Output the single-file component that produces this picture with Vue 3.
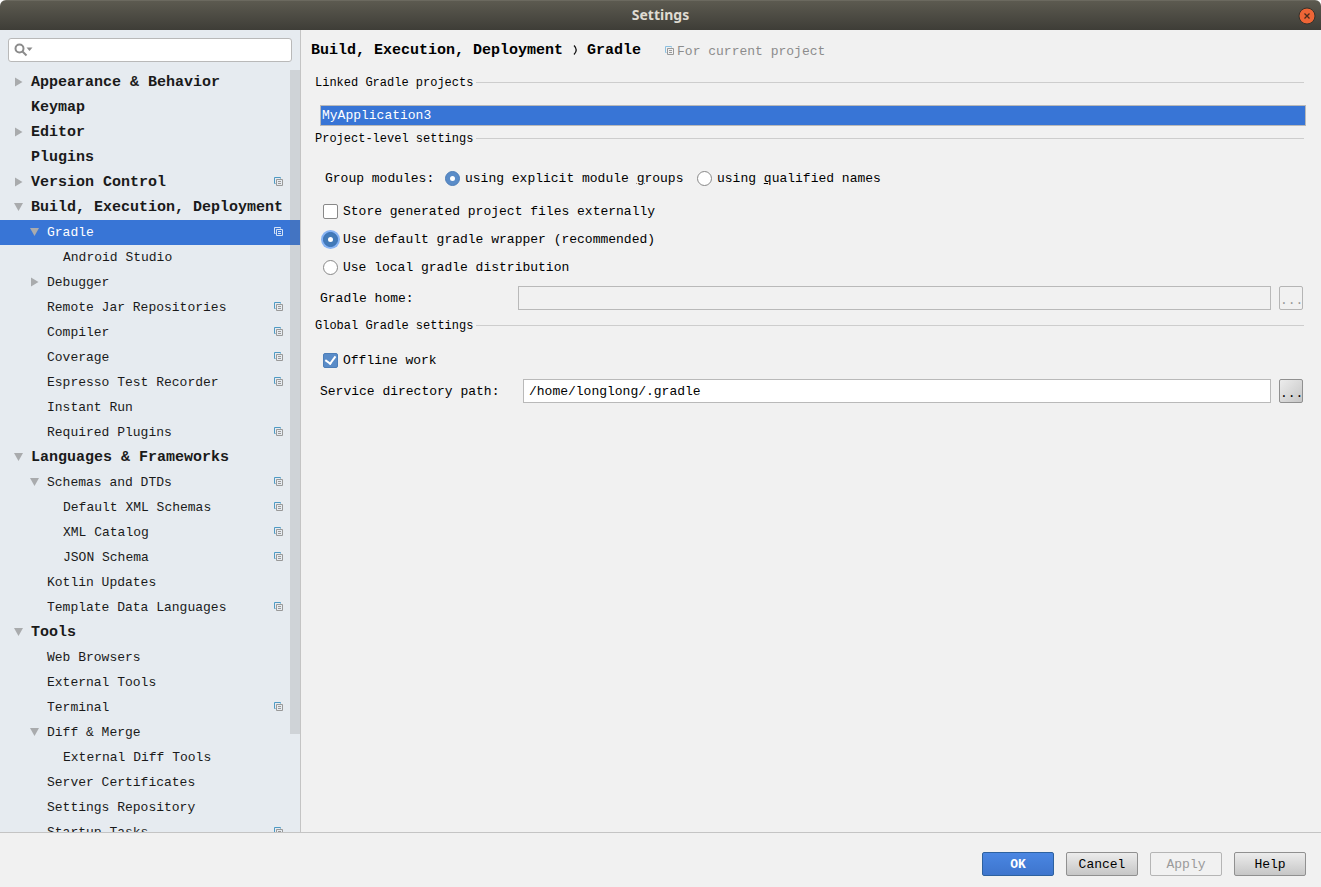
<script setup>
import { ref } from 'vue'

const rows = [
  { label: 'Appearance & Behavior', level: 0, state: 'closed' },
  { label: 'Keymap', level: 0 },
  { label: 'Editor', level: 0, state: 'closed' },
  { label: 'Plugins', level: 0 },
  { label: 'Version Control', level: 0, state: 'closed', project: true },
  { label: 'Build, Execution, Deployment', level: 0, state: 'open' },
  { label: 'Gradle', level: 1, state: 'open', project: true },
  { label: 'Android Studio', level: 2 },
  { label: 'Debugger', level: 1, state: 'closed' },
  { label: 'Remote Jar Repositories', level: 1, project: true },
  { label: 'Compiler', level: 1, project: true },
  { label: 'Coverage', level: 1, project: true },
  { label: 'Espresso Test Recorder', level: 1, project: true },
  { label: 'Instant Run', level: 1 },
  { label: 'Required Plugins', level: 1, project: true },
  { label: 'Languages & Frameworks', level: 0, state: 'open' },
  { label: 'Schemas and DTDs', level: 1, state: 'open', project: true },
  { label: 'Default XML Schemas', level: 2, project: true },
  { label: 'XML Catalog', level: 2, project: true },
  { label: 'JSON Schema', level: 2, project: true },
  { label: 'Kotlin Updates', level: 1 },
  { label: 'Template Data Languages', level: 1, project: true },
  { label: 'Tools', level: 0, state: 'open' },
  { label: 'Web Browsers', level: 1 },
  { label: 'External Tools', level: 1 },
  { label: 'Terminal', level: 1, project: true },
  { label: 'Diff & Merge', level: 1, state: 'open' },
  { label: 'External Diff Tools', level: 2 },
  { label: 'Server Certificates', level: 1 },
  { label: 'Settings Repository', level: 1 },
  { label: 'Startup Tasks', level: 1, project: true },
]

const selected = ref('Gradle')
const search = ref('')
const grouping = ref('explicit')
const storeExternally = ref(false)
const distribution = ref('wrapper')
const gradleHome = ref('')
const offline = ref(true)
const servicePath = ref('/home/longlong/.gradle')
</script>

<template>
  <div class="window">
    <header class="titlebar">
      <h1>Settings</h1>
      <button class="close" type="button" aria-label="Close">
        <svg width="18" height="18" viewBox="0 0 18 18">
          <circle cx="9" cy="9" r="8" fill="#ee6536" stroke="#35322c" />
          <path d="M6.5 6.5l5 5M11.5 6.5l-5 5" stroke="#4a2c1c" stroke-width="1.3" />
        </svg>
      </button>
    </header>

    <div class="body">
      <aside class="sidebar">
        <div class="search">
          <svg width="20" height="14" viewBox="0 0 20 14" aria-hidden="true">
            <circle cx="5.5" cy="5.5" r="4" fill="none" stroke="#8b8b8b" stroke-width="2" />
            <path d="M8.5 8.5l4 4" stroke="#8b8b8b" stroke-width="2" />
            <path d="M12.5 4.5h6l-3 3.500z" fill="#8b8b8b" />
          </svg>
          <input v-model="search" type="text" aria-label="Search settings" />
        </div>
        <nav class="tree">
          <button
            v-for="row in rows"
            :key="row.label"
            type="button"
            class="row"
            :class="['level' + row.level, { selected: row.label === selected }]"
            @click="selected = row.label"
          >
            <span class="arrow">
              <svg v-if="row.state === 'closed'" width="9" height="10" viewBox="0 0 9 10">
                <path d="M1 0.500l7.500 4.500-7.500 4.500z" fill="#a9abad" />
              </svg>
              <svg v-else-if="row.state === 'open'" width="9" height="10" viewBox="0 0 9 10">
                <path d="M0 1h9l-4.500 8z" fill="#a9abad" />
              </svg>
            </span>
            <span class="name">{{ row.label }}</span>
            <svg v-if="row.project" class="copy" width="9" height="9" viewBox="0 0 9 9">
              <path class="back" d="M1.500 6.500h-1v-6h6v1" />
              <path class="front" d="M2.500 2.500h6v6h-6zM4 4.500h3M4 6.500h3" />
            </svg>
          </button>
          <span class="thumb"></span>
        </nav>
      </aside>

      <main class="content">
        <div class="crumbs">
          <b>Build, Execution, Deployment</b>
          <svg class="chevron" width="5" height="10" viewBox="0 0 5 10">
            <path d="M1 0.500q4.500 4.500 0 9" fill="none" stroke="#111" stroke-width="1.300" />
          </svg>
          <b>Gradle</b>
          <span class="scope">
            <svg class="copy" width="9" height="9" viewBox="0 0 9 9">
              <path class="back" d="M1.500 6.500h-1v-6h6v1" />
              <path class="front" d="M2.500 2.500h6v6h-6zM4 4.500h3M4 6.500h3" />
            </svg>
            <span class="text">For current project</span>
          </span>
        </div>

        <h2>Linked Gradle projects</h2>
        <ul class="projects">
          <li>MyApplication3</li>
        </ul>

        <h2>Project-level settings</h2>
        <div class="grouping">
          <span class="caption text">Group modules:</span>
          <label class="choice first">
            <input v-model="grouping" type="radio" name="grouping" value="explicit" />
            <span class="text">using explicit module <u>g</u>roups</span>
          </label>
          <label class="choice">
            <input v-model="grouping" type="radio" name="grouping" value="qualified" />
            <span class="text">using <u>q</u>ualified names</span>
          </label>
        </div>
        <div class="options">
          <label class="choice">
            <input v-model="storeExternally" type="checkbox" />
            <span class="text">Store generated project files externally</span>
          </label>
          <label class="choice focused">
            <input v-model="distribution" type="radio" name="distribution" value="wrapper" />
            <span class="text">Use default gradle wrapper (recommended)</span>
          </label>
          <label class="choice">
            <input v-model="distribution" type="radio" name="distribution" value="local" />
            <span class="text">Use local gradle distribution</span>
          </label>
        </div>
        <div class="field">
          <label class="text" for="home">Gradle home:</label>
          <input id="home" v-model="gradleHome" type="text" disabled />
          <button type="button" class="browse" disabled aria-label="Browse Gradle home">...</button>
        </div>

        <h2 class="global">Global Gradle settings</h2>
        <div class="offline">
          <label class="choice">
            <input v-model="offline" type="checkbox" />
            <span class="text">Offline work</span>
          </label>
        </div>
        <div class="field wide">
          <label class="text" for="service">Service directory path:</label>
          <input id="service" v-model="servicePath" type="text" />
          <button type="button" class="browse" aria-label="Browse service directory">...</button>
        </div>
      </main>
    </div>

    <footer class="actions">
      <button type="button" class="primary">OK</button>
      <button type="button">Cancel</button>
      <button type="button" disabled>Apply</button>
      <button type="button">Help</button>
    </footer>
  </div>
</template>

<style>
html,
body {
  margin: 0;
  background: #fff;
}
</style>

<style scoped>
.window {
  display: flex;
  flex-direction: column;
  height: 100vh;
  background: #f1f1f1;
  border-radius: 6px 6px 0 0;
  overflow: hidden;
  color: #000;
  font: 13px/16px "Liberation Mono", monospace;
}
.window * {
  box-sizing: border-box;
}
button,
input {
  font: inherit;
  color: inherit;
  margin: 0;
}
.titlebar {
  display: flex;
  flex: none;
  align-items: center;
  height: 30px;
  padding: 0 5px 0 23px;
  background: linear-gradient(#5c5a50, #3e3d37);
  border-top: 1px solid #6b695f;
}
.titlebar h1 {
  flex: 1;
  margin: 0;
  padding-bottom: 2px;
  text-align: center;
  color: #dfdbd2;
  font: bold 14px/20px "Noto Sans", sans-serif;
}
.close {
  display: flex;
  padding: 0;
  border: 0;
  background: none;
}
.body {
  display: flex;
  flex: 1;
  min-height: 0;
  border-bottom: 1px solid #c4c4c4;
}
.sidebar {
  display: flex;
  flex: none;
  flex-direction: column;
  width: 301px;
  background: #e6ebf0;
  border-right: 1px solid #c4c4c4;
}
.search {
  display: flex;
  flex: none;
  align-items: center;
  height: 24px;
  margin: 8px;
  padding: 0 5px;
  border: 1px solid #b9b9b9;
  border-radius: 3px;
  background: #fff;
}
.search input {
  flex: 1;
  min-width: 0;
  border: 0;
  outline: 0;
  background: none;
}
.tree {
  position: relative;
  flex: 1;
  min-height: 0;
  overflow: hidden;
}
.row {
  display: flex;
  align-items: center;
  width: 100%;
  height: 25px;
  padding: 0 17px 0 14px;
  border: 0;
  background: none;
  color: #1a1a1a;
  text-align: left;
  white-space: nowrap;
}
.level0 {
  font-size: 15px;
  font-weight: bold;
}
.level1 {
  padding-left: 30px;
}
.level2 {
  padding-left: 46px;
}
.arrow {
  display: flex;
  flex: none;
  width: 17px;
  padding-bottom: 2px;
}
.name {
  flex: 1;
  min-width: 0;
}
.selected {
  background: #3875d6;
  color: #fff;
}
.thumb {
  position: absolute;
  top: 0;
  right: 0;
  width: 10px;
  height: 664px;
  background: rgba(115, 115, 115, 0.2);
}
.copy {
  flex: none;
  margin-bottom: 2px;
}
.copy path {
  fill: none;
}
.copy .back {
  stroke: #4f9ac4;
}
.copy .front {
  stroke: #999;
}
.selected .copy path {
  stroke: #d5e2f6;
}
.content {
  flex: 1;
  min-width: 0;
  padding: 0 17px 0 14px;
}
.text {
  padding-top: 2px;
}
.crumbs {
  display: flex;
  align-items: center;
  height: 42px;
  margin-left: -4px;
}
.crumbs b {
  font-size: 15px;
}
.chevron {
  margin: 0 9px 2px 10px;
}
.scope {
  display: flex;
  align-items: center;
  gap: 3px;
  margin-left: 24px;
  color: #8c8c8c;
}
.scope .copy .back {
  stroke: #8cc0e0;
}
h2 {
  display: flex;
  align-items: center;
  gap: 3px;
  height: 22px;
  margin: 0;
  font-size: 12px;
  font-weight: normal;
}
h2::after {
  content: "";
  flex: 1;
  height: 1px;
  margin-bottom: 2px;
  background: #cdcdcd;
}
.projects {
  margin: 11px -2px 2px 5px;
  padding: 0;
  border: 1px solid #b9b9b9;
  background: #3875d6;
  color: #fff;
  line-height: 19px;
  list-style: none;
}
.projects li {
  padding-left: 1px;
}
.grouping {
  display: flex;
  align-items: center;
  height: 24px;
  margin: 16px 0 7px 10px;
}
.caption {
  width: 120px;
}
.choice {
  display: flex;
  align-items: center;
  gap: 5px;
}
.choice.first {
  width: 252px;
}
.choice input {
  appearance: none;
  display: grid;
  flex: none;
  place-items: center;
  width: 15px;
  height: 15px;
  border: 1px solid #888;
  border-radius: 2px;
  background: #fff;
}
.choice input[type="radio"] {
  border-radius: 50%;
}
.choice input:checked {
  border-color: #4d7eb8;
  background: #5a8cc8;
}
.choice input[type="radio"]:checked::before {
  content: "";
  width: 5px;
  height: 5px;
  border-radius: 50%;
  background: #fff;
}
.choice input[type="checkbox"]:checked::before {
  content: "";
  width: 5px;
  height: 8px;
  margin-bottom: 2px;
  border: solid #fff;
  border-width: 0 2px 2px 0;
  transform: rotate(36deg);
}
.focused input:checked {
  border-color: #3a71b4;
  background: #427ab8;
  box-shadow: 0 0 0 2px #86b3f3;
}
.options,
.offline {
  margin: 0 8px 5px;
}
.options .choice,
.offline .choice {
  height: 28px;
}
.field {
  display: flex;
  align-items: center;
  margin-left: 5px;
  padding-right: 1px;
}
.field label {
  width: 198px;
}
.wide label {
  width: 203px;
}
.field input {
  flex: 1;
  min-width: 0;
  height: 24px;
  padding: 0 5px;
  border: 1px solid #b9b9b9;
  background: #fff;
}
.field input:disabled {
  background: #f1f1f1;
}
.global {
  margin: 5px 0 9px;
}
.actions {
  display: flex;
  flex: none;
  justify-content: flex-end;
  gap: 12px;
  height: 54px;
  padding: 19px 15px 0 0;
}
.actions button,
.browse {
  height: 24px;
  padding: 2px 0 0;
  border: 1px solid #909090;
  border-radius: 2px;
  background: linear-gradient(#ececec, #c6c6c6);
}
.actions button {
  width: 72px;
}
.browse {
  width: 24px;
  margin-left: 8px;
  padding-top: 5px;
  background: linear-gradient(135deg, #ececec, #c6c6c6);
}
.actions .primary {
  border-color: #2d619f;
  background: linear-gradient(#4a86e2, #3e75cd);
  color: #fff;
  font-weight: bold;
}
.actions button:disabled,
.browse:disabled {
  border-color: #b5b5b5;
  background: #f1f1f1;
  color: #9a9a9a;
}
</style>
